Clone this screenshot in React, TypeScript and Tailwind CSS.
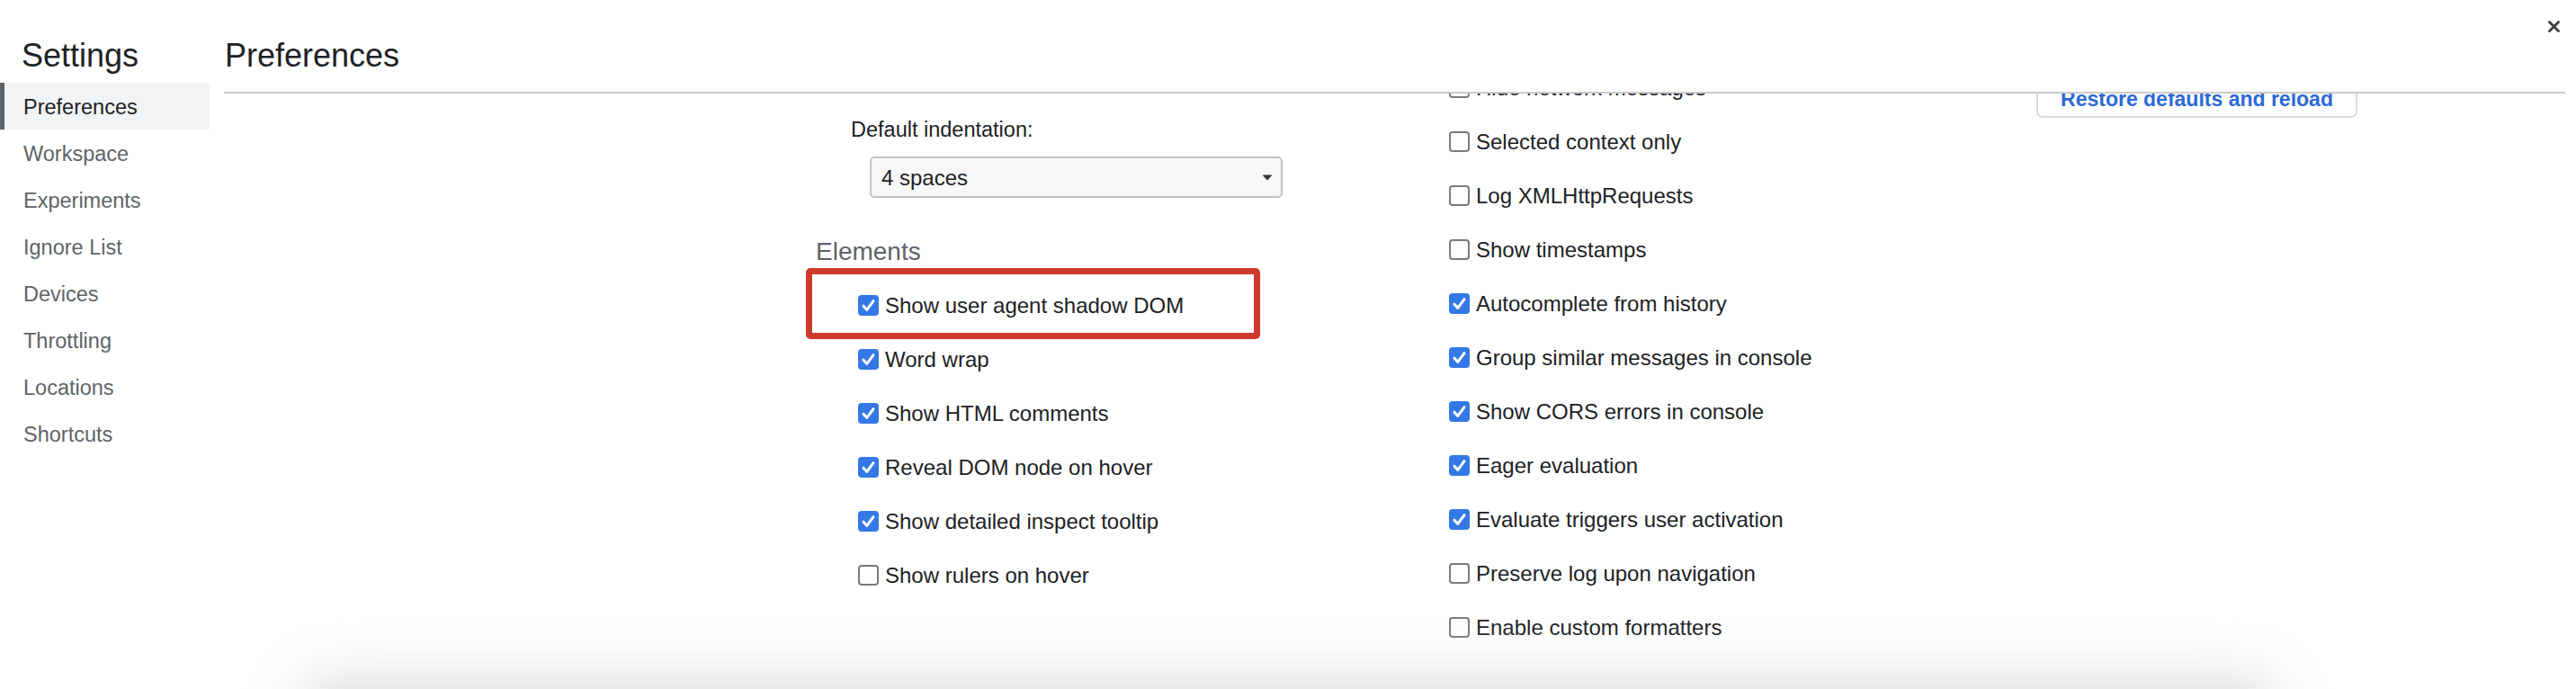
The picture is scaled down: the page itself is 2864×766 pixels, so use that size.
import React from 'react';

const navItems = ['Preferences', 'Workspace', 'Experiments', 'Ignore List', 'Devices', 'Throttling', 'Locations', 'Shortcuts'];

const elementsOptions = [
    { label: 'Show user agent shadow DOM', checked: true, highlight: true },
    { label: 'Word wrap', checked: true },
    { label: 'Show HTML comments', checked: true },
    { label: 'Reveal DOM node on hover', checked: true },
    { label: 'Show detailed inspect tooltip', checked: true },
    { label: 'Show rulers on hover', checked: false },
];

const consoleOptions = [
    { label: 'Hide network messages', checked: false },
    { label: 'Selected context only', checked: false },
    { label: 'Log XMLHttpRequests', checked: false },
    { label: 'Show timestamps', checked: false },
    { label: 'Autocomplete from history', checked: true },
    { label: 'Group similar messages in console', checked: true },
    { label: 'Show CORS errors in console', checked: true },
    { label: 'Eager evaluation', checked: true },
    { label: 'Evaluate triggers user activation', checked: true },
    { label: 'Preserve log upon navigation', checked: false },
    { label: 'Enable custom formatters', checked: false },
];

function Checkbox({ checked }: { checked: boolean }) {
    if (checked) {
        return (
            <span className="flex h-[23px] w-[23px] shrink-0 items-center justify-center rounded-[4px] bg-[#3478e6]">
                <svg width="23" height="23" viewBox="0 0 23 23">
                    <path d="M6 12.2 L9.8 16.4 L17 6.6" fill="none" stroke="white" strokeWidth="3" strokeLinecap="round" strokeLinejoin="round" />
                </svg>
            </span>
        );
    }
    return <span className="h-[23px] w-[23px] shrink-0 rounded-[4px] border-2 border-[#7a7a7a] bg-white" />;
}

function OptionRow({ label, checked, highlight, indent }: { label: string; checked: boolean; highlight?: boolean; indent: string }) {
    return (
        <div className={`relative flex h-[60px] items-center gap-[7px] ${indent}`}>
            {highlight && (
                <div className="pointer-events-none absolute -top-[11px] -bottom-[8px] left-0 w-[505px] rounded-[5px] border-[7px] border-[#cf3a2f]" />
            )}
            <Checkbox checked={checked} />
            <span className="pt-[1px] text-[24px] leading-none whitespace-nowrap text-[#202124]">{label}</span>
        </div>
    );
}

export default function App() {
    return (
        <div className="relative flex h-[766px] w-full overflow-hidden bg-white font-['Liberation_Sans',Arial,sans-serif]">
            {/* Sidebar */}
            <aside className="w-[249px] shrink-0">
                <div className="h-[92px] pl-[24px] pt-[44px]">
                    <h1 className="text-[36px] leading-[36px] text-[#202124]">Settings</h1>
                </div>
                <nav className="w-[233px]">
                    {navItems.map((item, idx) => (
                        <div
                            key={item}
                            className={
                                idx === 0
                                    ? 'flex h-[52px] items-center border-l-[5px] border-[#5f6368] bg-[#f1f3f4] pl-[21px] pt-[3px] text-[23.5px] text-[#202124]'
                                    : 'flex h-[52px] items-center border-l-[5px] border-transparent pl-[21px] pt-[3px] text-[23.5px] text-[#5f6368]'
                            }
                        >
                            {item}
                        </div>
                    ))}
                </nav>
            </aside>

            {/* Main panel */}
            <main className="mr-[12px] flex min-w-0 flex-1 flex-col">
                <header className="h-[104px] shrink-0 border-b-2 border-[#cbcbcb] pl-[1px] pt-[44px]">
                    <h2 className="text-[36px] leading-[36px] text-[#202124]">Preferences</h2>
                </header>

                <div className="flex flex-1 overflow-hidden pl-[647px]">
                    {/* Sources / Elements column */}
                    <div className="w-[668px] shrink-0">
                        <div className="mt-[25px] pl-[50px] text-[23.5px] leading-[30px] text-[#202124]">Default indentation:</div>
                        <div className="ml-[71px] mt-[15px] flex h-[46px] w-[459px] items-center justify-between rounded-[5px] border-2 border-[#c4c4c4] bg-[#f8f8f8] pl-[11px] pr-[9px]">
                            <span className="pt-[2px] text-[24px] text-[#202124]">4 spaces</span>
                            <svg width="12" height="7" viewBox="0 0 12 7">
                                <path d="M0.5 0.5 L11.5 0.5 L6 6.5 Z" fill="#333333" />
                            </svg>
                        </div>
                        <h3 className="mt-[43px] pl-[11px] text-[28px] leading-[34px] text-[#5f6368]">Elements</h3>
                        <div className="mt-[12px]">
                            {elementsOptions.map((opt) => (
                                <OptionRow key={opt.label} label={opt.label} checked={opt.checked} highlight={opt.highlight} indent="pl-[58px]" />
                            ))}
                        </div>
                    </div>

                    {/* Console column */}
                    <div className="-mt-[37px] w-[700px] shrink-0">
                        {consoleOptions.map((opt) => (
                            <OptionRow key={opt.label} label={opt.label} checked={opt.checked} indent="pl-[47px]" />
                        ))}
                    </div>

                    {/* Restore column */}
                    <div className="-mt-[16px] shrink-0">
                        <button className="h-[43px] w-[357px] rounded-[7px] border-2 border-[#dadce0] bg-white pt-[2px] text-[23px] font-bold text-[#2b69d6]">
                            Restore defaults and reload
                        </button>
                    </div>
                </div>
            </main>

            {/* Close button */}
            <button className="absolute right-[18px] top-[23px] h-[13px] w-[13px]" aria-label="Close">
                <svg width="13" height="13" viewBox="0 0 13 13">
                    <path d="M1.5 1.5 L11.5 11.5 M11.5 1.5 L1.5 11.5" stroke="#3c3c3c" strokeWidth="2.8" strokeLinecap="round" />
                </svg>
            </button>

            {/* Shadow of the window below */}
            <div className="pointer-events-none absolute left-[330px] right-[330px] top-[750px] h-[100px] rounded-[40px] bg-[#e2e2e2] blur-[28px]" />
        </div>
    );
}
